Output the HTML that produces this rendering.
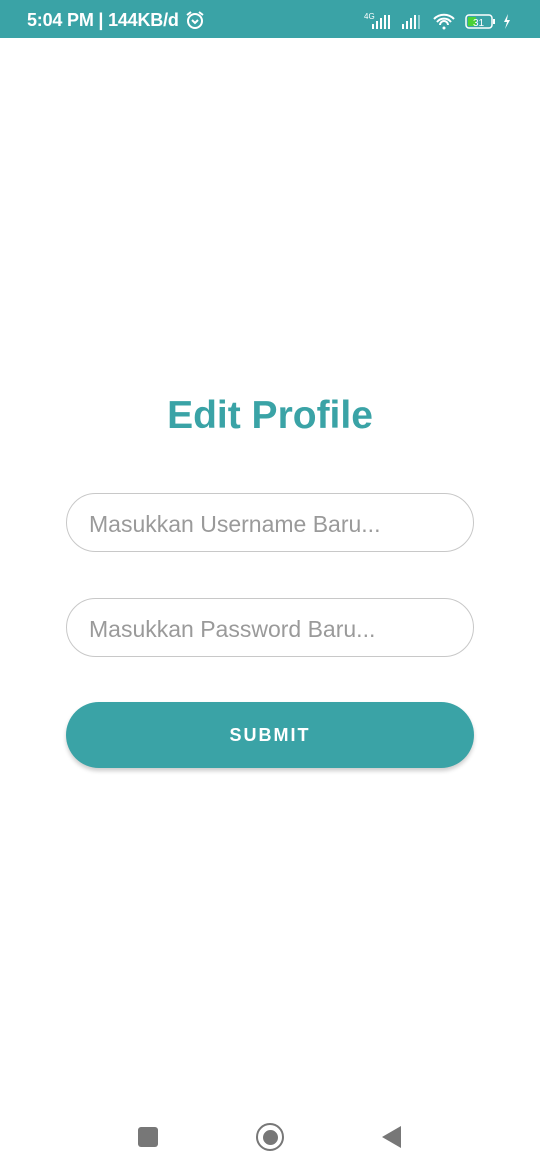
<!DOCTYPE html>
<html><head><style>
body{margin:0;width:540px;height:1170px;background:#fff;position:relative;font-family:"Liberation Sans",Roboto,sans-serif;overflow:hidden}
.sb{position:absolute;top:0;left:0;width:540px;height:38px;background:#3aa3a6;color:#fff}
.t{position:absolute;left:27px;top:10px;font-size:18px;font-weight:bold;letter-spacing:-0.2px}
h1{position:absolute;top:394px;left:0;width:540px;text-align:center;margin:0;font-size:39px;font-weight:bold;color:#3aa3a6}
.in{position:absolute;left:66px;height:59px;border:1.3px solid #c8c8c8;border-radius:30px;box-sizing:border-box;width:408px;font-size:23px;color:#9a9a9a;line-height:60px;padding-left:22px}
.btn{position:absolute;left:66px;top:702px;width:408px;height:66px;border-radius:33px;background:#3aa3a6;color:#fff;text-align:center;line-height:66px;font-size:18px;font-weight:bold;letter-spacing:2px;box-shadow:0 3px 4px rgba(0,0,0,.2)}
</style></head><body>
<div class="sb"><div class="t">5:04 PM | 144KB/d</div>
<svg style="position:absolute;left:185px;top:10px" width="22" height="20"><circle cx="10" cy="11" r="7" stroke="#fff" stroke-width="2" fill="none"/><path d="M2 5l4-3M18 5l-4-3M7 10l3 3 3-3" stroke="#fff" stroke-width="2" fill="none"/></svg>
<svg style="position:absolute;left:362px;top:12px" width="155" height="20">
<text x="2" y="7" font-size="8" fill="#fff" font-family="Liberation Sans">4G</text>
<rect x="10" y="12" width="2" height="5" fill="#fff"/><rect x="14" y="9" width="2" height="8" fill="#fff"/><rect x="18" y="6" width="2" height="11" fill="#fff"/><rect x="22" y="3" width="2" height="14" fill="#fff"/><rect x="26" y="3" width="2" height="14" fill="#fff"/>
<rect x="40" y="12" width="2" height="5" fill="#fff"/><rect x="44" y="9" width="2" height="8" fill="#fff"/><rect x="48" y="6" width="2" height="11" fill="#fff"/><rect x="52" y="3" width="2" height="14" fill="#fff"/><rect x="56" y="3" width="2" height="14" fill="#8fd0d2"/>
<path d="M72 7a14 14 0 0 1 20 0M75 10a9 9 0 0 1 14 0M78 13a4 4 0 0 1 8 0" stroke="#fff" stroke-width="2" fill="none"/><circle cx="82" cy="16" r="1.5" fill="#fff"/>
<rect x="104" y="3" width="26" height="13" rx="3" fill="none" stroke="#fff" stroke-width="1.5"/><rect x="106" y="5" width="8" height="9" fill="#4cd137"/><text x="111" y="14" font-size="10" fill="#fff" font-family="Liberation Sans">31</text><rect x="131" y="7" width="2" height="5" fill="#fff"/>
<path d="M146 2l-4 8h3l-2 7 5-9h-3z" fill="#fff"/>
</svg></div>
<h1>Edit Profile</h1>
<div class="in" style="top:493px">Masukkan Username Baru...</div>
<div class="in" style="top:598px">Masukkan Password Baru...</div>
<div class="btn">SUBMIT</div>
<div style="position:absolute;left:138px;top:1127px;width:20px;height:20px;border-radius:3px;background:#777"></div>
<div style="position:absolute;left:256px;top:1123px;width:24px;height:24px;border:2.5px solid #777;border-radius:50%"></div>
<div style="position:absolute;left:263px;top:1130px;width:15px;height:15px;border-radius:50%;background:#777"></div>
<svg style="position:absolute;left:380px;top:1125px" width="24" height="24"><path d="M2 12L21 1V23Z" fill="#777"/></svg>
</body></html>
